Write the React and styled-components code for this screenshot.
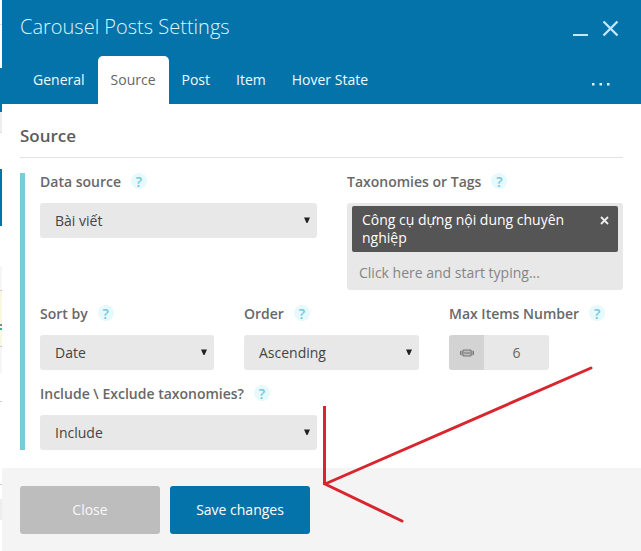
import React, { useState } from 'react'
import styled, { createGlobalStyle } from 'styled-components'

const GlobalStyle = createGlobalStyle`
  * { box-sizing: border-box; }
  body {
    margin: 0;
    background: #fff;
    font-family: 'Open Sans', sans-serif;
    font-size: 14px;
    color: #444;
    overflow: hidden;
  }
  button, input { font: inherit; border: none; padding: 0; }
`

const Page = styled.div`
  position: relative;
  display: flex;
  width: 641px;
  height: 551px;
  overflow: hidden;
`

const PageEdge = styled.div`
  display: flex;
  flex-direction: column;
  width: 2px;
`

const EdgeBlock = styled.div`
  height: ${props => props.size}px;
  background: ${props => props.color};
`

const Panel = styled.div`
  flex: 1;
  display: flex;
  flex-direction: column;
`

const PanelHeader = styled.header`
  display: flex;
  flex-direction: column;
  height: 104px;
  padding: 0 18px;
  background: #0473aa;
`

const TitleRow = styled.div`
  display: flex;
  justify-content: space-between;
  height: 56px;
`

const Title = styled.h1`
  margin: 0;
  font-size: 20px;
  font-weight: 300;
  line-height: 54px;
  color: #dff6ff;
`

const Controls = styled.div`
  display: flex;
  gap: 13px;
  padding: 20px 4px 0 0;
`

const Control = styled.button`
  display: flex;
  width: 17px;
  height: 17px;
  background: none;
`

const Tabs = styled.nav`
  display: flex;
  height: 48px;
`

const Tab = styled.button`
  padding: 0 13px 2px;
  border-radius: 5px 5px 0 0;
  background: ${props => props.$active ? '#fff' : 'transparent'};
  color: ${props => props.$active ? '#666' : '#f0fbff'};
`

const MoreTabs = styled.button`
  display: flex;
  align-items: center;
  margin-left: auto;
  padding: 8px 13px 0 0;
  background: none;
`

const Body = styled.main`
  flex: 1;
  padding: 0 18px;
`

const SectionTitle = styled.h2`
  height: 54px;
  margin: 0 0 15px;
  border-bottom: 1px solid #e3e3e3;
  font-size: 17px;
  font-weight: 600;
  line-height: 64px;
  color: #5c5c5c;
`

const Fields = styled.div`
  display: flex;
  flex-direction: column;
  height: 277px;
  padding-left: 15px;
  border-left: 5px solid #74cdd8;
`

const Row = styled.div`
  display: flex;
  gap: 30px;
  height: ${props => props.size}px;
`

const Field = styled.div`
  width: ${props => props.size}px;
  flex-shrink: 0;
`

const Label = styled.label`
  display: flex;
  align-items: center;
  gap: 10px;
  height: 18px;
  margin-bottom: 12px;
  padding-bottom: 2px;
  font-weight: 600;
  white-space: nowrap;
  color: #686868;
`

const Help = styled.span`
  width: 16px;
  height: 16px;
  border-radius: 50%;
  background: #e6f9fb;
  font-size: 14px;
  font-weight: 600;
  line-height: 17px;
  text-align: center;
  color: #76c4dc;
`

const Select = styled.div`
  display: flex;
  align-items: center;
  justify-content: space-between;
  height: 35px;
  padding: 0 7px 0 15px;
  border-radius: 3px;
  background: #e8e8e8;
`

const TagBox = styled.div`
  height: 87px;
  padding: 3px 5px;
  border-radius: 3px;
  background: #e8e8e8;
`

const Tag = styled.div`
  display: flex;
  justify-content: space-between;
  height: 46px;
  padding: 5px 9px 0 10px;
  border-radius: 2px;
  background: #555;
  line-height: 18px;
  color: #fff;
`

const TagText = styled.span`
  width: 215px;
`

const TagInput = styled.input`
  width: 100%;
  height: 41px;
  padding: 0 7px;
  background: none;
  &::placeholder { color: #858585; opacity: 1; }
`

const NumberField = styled.div`
  display: flex;
  width: 100px;
  height: 35px;
  border-radius: 3px;
  overflow: hidden;
  background: #e8e8e8;
`

const DragHandle = styled.div`
  display: flex;
  align-items: center;
  justify-content: center;
  width: 35px;
  background: #d3d3d3;
`

const NumberValue = styled.div`
  flex: 1;
  line-height: 36px;
  text-align: center;
  color: #666;
`

const Footer = styled.footer`
  display: flex;
  gap: 10px;
  height: 83px;
  padding: 18px;
  background: #f4f4f4;
`

const Button = styled.button`
  width: 140px;
  height: 48px;
  padding-bottom: 2px;
  border-radius: 3px;
  background: ${props => props.$primary ? '#0473aa' : '#bdbdbd'};
  color: ${props => props.$primary ? '#fff' : '#f8f8f8'};
`

const Arrow = styled.svg`
  position: absolute;
  inset: 0;
  pointer-events: none;
`

const tabs = ['General', 'Source', 'Post', 'Item', 'Hover State']

// slivers of the admin page left of the panel
const edge = [
  [24, '#fff'], [1, '#ddd'], [43, '#fff'], [44, '#0473aa'], [20, '#eee'], [1, '#ddd'],
  [36, '#fff'], [57, '#0473aa'], [40, '#fff'], [24, '#f6f6f6'], [1, '#ccc'],
  [33, '#f7f7e2'], [2, '#888'], [2, '#f7f7e2'], [2, '#4aa99b'], [16, '#f7f7e2'],
  [1, '#ccc'], [26, '#f6f6f6'], [28, '#fff'], [1, '#ccc'], [82, '#fff'], [1, '#ccc'],
  [14, '#fff'], [21, '#eee'], [31, '#fff'],
]

const FieldLabel = ({ children }) => (
  <Label>
    {children}
    <Help>?</Help>
  </Label>
)

const Dropdown = ({ value }) => (
  <Select>
    {value}
    <svg width="6" height="7" viewBox="0 0 6 7">
      <path d="M0 0.5h6L3.5 6h-1z" fill="#222" />
    </svg>
  </Select>
)

const App = () => {
  const [active, setActive] = useState('Source')

  return (
    <Page>
      <GlobalStyle />
      <PageEdge>
        {edge.map(([size, color], idx) => <EdgeBlock key={idx} size={size} color={color} />)}
      </PageEdge>

      <Panel>
        <PanelHeader>
          <TitleRow>
            <Title>Carousel Posts Settings</Title>
            <Controls>
              <Control>
                <svg width="17" height="17" viewBox="0 0 17 17">
                  <path d="M1 15h15" stroke="#c5e6f5" strokeWidth="2" />
                </svg>
              </Control>
              <Control>
                <svg width="17" height="17" viewBox="0 0 17 17">
                  <path d="M1.5 1.5l14 14M15.5 1.5l-14 14" stroke="#c5e6f5" strokeWidth="2.4" />
                </svg>
              </Control>
            </Controls>
          </TitleRow>
          <Tabs>
            {tabs.map(tab => (
              <Tab key={tab} $active={tab === active} onClick={() => setActive(tab)}>{tab}</Tab>
            ))}
            <MoreTabs>
              <svg width="18" height="3" viewBox="0 0 18 3">
                <path d="M0 0h2.5v2.5H0zM7.5 0H10v2.5H7.5zM15 0h2.5v2.5H15z" fill="#d5f1fc" />
              </svg>
            </MoreTabs>
          </Tabs>
        </PanelHeader>

        <Body>
          <SectionTitle>Source</SectionTitle>
          <Fields>
            <Row size={132}>
              <Field size={277}>
                <FieldLabel>Data source</FieldLabel>
                <Dropdown value="Bài viết" />
              </Field>
              <Field size={276}>
                <FieldLabel>Taxonomies or Tags</FieldLabel>
                <TagBox>
                  <Tag>
                    <TagText>Công cụ dựng nội dung chuyên nghiệp</TagText>
                    <svg width="9" height="18" viewBox="0 0 9 18">
                      <path d="M1 6l7 7M8 6l-7 7" stroke="#eee" strokeWidth="1.8" />
                    </svg>
                  </Tag>
                  <TagInput placeholder="Click here and start typing..." />
                </TagBox>
              </Field>
            </Row>
            <Row size={80}>
              <Field size={174}>
                <FieldLabel>Sort by</FieldLabel>
                <Dropdown value="Date" />
              </Field>
              <Field size={175}>
                <FieldLabel>Order</FieldLabel>
                <Dropdown value="Ascending" />
              </Field>
              <Field size={174}>
                <FieldLabel>Max Items Number</FieldLabel>
                <NumberField>
                  <DragHandle>
                    <svg width="14" height="8" viewBox="0 0 14 8">
                      <path d="M3 1h8v6H3z" fill="#bbb" stroke="#777" />
                      <path d="M4 4h6M.5 2v4M2 1.5v5M12 1.5v5M13.5 2v4" stroke="#777" />
                    </svg>
                  </DragHandle>
                  <NumberValue>6</NumberValue>
                </NumberField>
              </Field>
            </Row>
            <Field size={277}>
              <FieldLabel>Include \ Exclude taxonomies?</FieldLabel>
              <Dropdown value="Include" />
            </Field>
          </Fields>
        </Body>

        <Footer>
          <Button>Close</Button>
          <Button $primary>Save changes</Button>
        </Footer>
      </Panel>

      <Arrow width="641" height="551" viewBox="0 0 641 551" fill="none" stroke="#d9252d" strokeWidth="3">
        <path d="M324.5 406v79" />
        <path d="M591 368L325 484L402 521" strokeLinecap="round" strokeLinejoin="round" />
      </Arrow>
    </Page>
  )
}

export default App
